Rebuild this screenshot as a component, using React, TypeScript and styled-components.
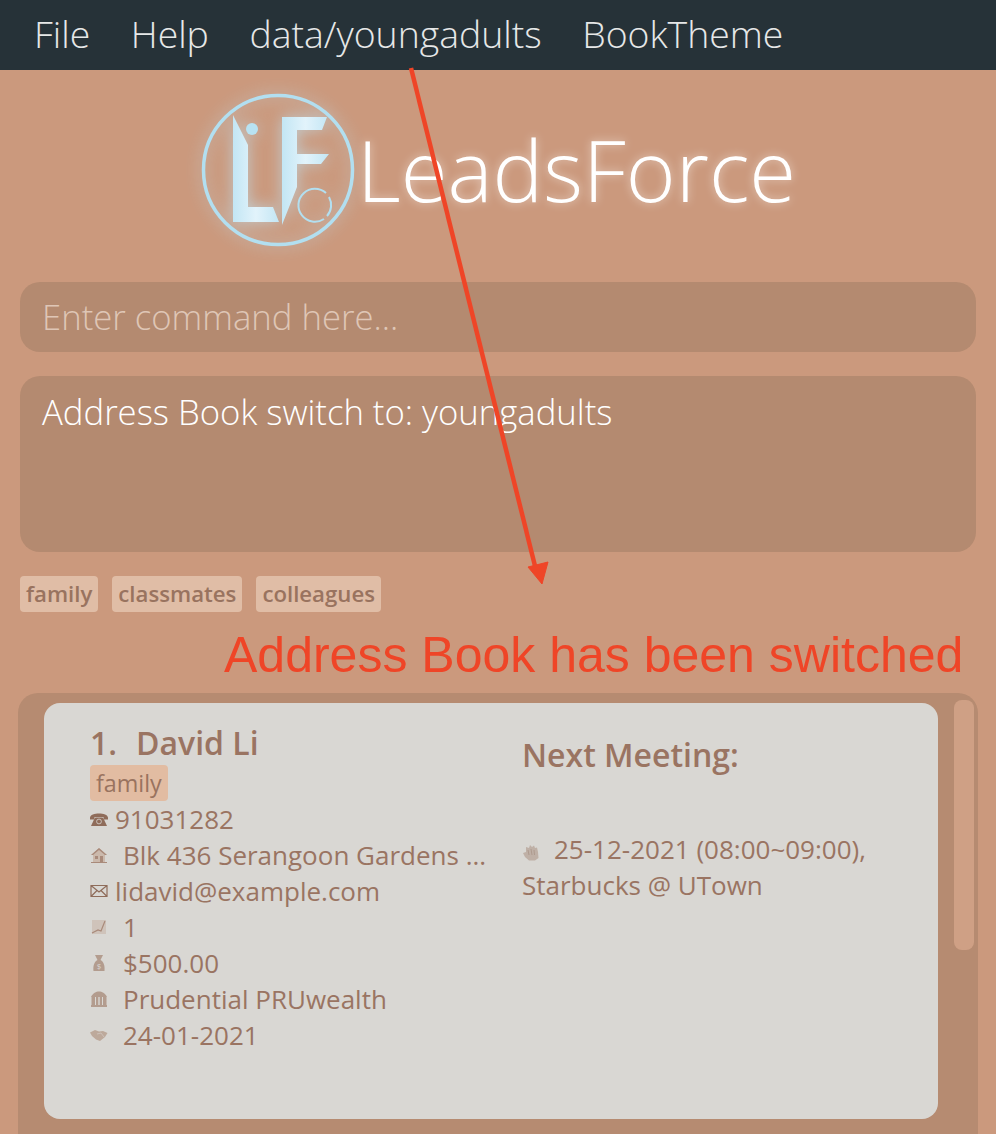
import React, { ReactElement, ReactNode } from 'react'
import styled, { createGlobalStyle } from 'styled-components'

const GlobalStyle = createGlobalStyle`
  html, body {
    margin: 0;
    padding: 0;
    height: 1134px;
    overflow: hidden;
    background: #cb997d;
  }
`

const Page = styled.div`
  position: relative;
  width: 996px;
  height: 1134px;
  overflow: hidden;
  display: flex;
  flex-direction: column;
  background: #cb997d;
  font-family: 'Open Sans', sans-serif;
`

const MenuBar = styled.nav`
  height: 70px;
  flex: none;
  display: flex;
  align-items: center;
  gap: 40.5px;
  padding-left: 34px;
  padding-bottom: 2px;
  box-sizing: border-box;
  background: #263238;
`

const MenuItem = styled.span`
  color: #e6e8e8;
  font-size: 37.4px;
  font-weight: 300;
  line-height: 68px;
`

const Header = styled.header`
  height: 212px;
  flex: none;
  display: flex;
  align-items: flex-start;
  padding: 10px 0 0 190px;
  box-sizing: border-box;
`

const LogoMark = styled.svg`
  flex: none;
  overflow: visible;
  filter: drop-shadow(0 0 8px rgb(190 228 245 / 70%));
`

const AppTitle = styled.h1`
  margin: 14px 0 0 1px;
  color: #ffffff;
  font-size: 85.2px;
  font-weight: 300;
  line-height: 150px;
  letter-spacing: 0;
  text-shadow: 0 0 10px rgb(255 255 255 / 55%);
`

const Box = styled.div<{ $height: number }>`
  height: ${p => p.$height}px;
  flex: none;
  margin: 0 20px;
  padding: 0 22px;
  box-sizing: border-box;
  border-radius: 20px;
  background: #b48a70;
  font-size: 34.7px;
  font-weight: 300;
`

const CommandBox = styled(Box)`
  display: flex;
  align-items: center;
  color: #dfc6b6;
  padding-bottom: 2px;
  margin-bottom: 24px;
`

const ResultBox = styled(Box)`
  color: #ffffff;
  padding-top: 14px;
  line-height: 44px;
`

const TagRow = styled.div`
  flex: none;
  display: flex;
  gap: 14px;
  margin: 24px 20px 0;
`

const Tag = styled.span`
  height: 36px;
  padding: 0 6px 2px;
  box-sizing: border-box;
  border-radius: 4px;
  display: flex;
  align-items: center;
  background: #e0bda6;
  color: #99735f;
  font-size: 22.2px;
  font-weight: 600;
`

const ListPanel = styled.section`
  flex: none;
  height: 460px;
  margin: 81px 18px 0;
  padding: 10px 4px 0 26px;
  box-sizing: border-box;
  display: flex;
  gap: 16px;
  border-radius: 20px 20px 0 0;
  background: #b68b71;
`

const PersonCard = styled.article`
  width: 894px;
  height: 416px;
  flex: none;
  box-sizing: border-box;
  padding: 18px 46px 0;
  display: grid;
  grid-template-columns: 432px 1fr;
  border-radius: 16px;
  background: #d9d7d3;
  color: #9a7462;
  font-size: 26px;
  line-height: 36px;
`

const Column = styled.div`
  display: flex;
  flex-direction: column;
  min-width: 0;
`

const Name = styled.div`
  font-size: 32px;
  font-weight: 600;
  line-height: 44px;
`

const NameIndex = styled.span`
  margin-right: 19px;
`

const CardTag = styled(Tag)`
  align-self: flex-start;
  padding-bottom: 0;
  background: #e2bca2;
  font-weight: 400;
  font-size: 23.3px;
`

const Field = styled.div<{ $wide?: boolean }>`
  height: 36px;
  display: flex;
  align-items: center;
  gap: ${p => (p.$wide ? 15 : 7)}px;
  white-space: nowrap;
`

const IconSlot = styled.span`
  width: 18px;
  height: 18px;
  flex: none;
  display: flex;
  align-items: center;
  justify-content: center;

  svg {
    display: block;
    width: 100%;
    height: 100%;
  }
`

const MeetingTitle = styled.div`
  margin-top: 12px;
  font-size: 32px;
  font-weight: 600;
  line-height: 43px;
`

const MeetingText = styled.div`
  margin-top: 55px;
  font-size: 26px;
  line-height: 36px;
`

const MeetingIcon = styled(IconSlot)`
  display: inline-flex;
  margin-right: 14px;
  vertical-align: -3px;
`

const ScrollThumb = styled.div`
  width: 20px;
  height: 250px;
  margin-top: -3px;
  flex: none;
  border-radius: 8px;
  background: #cfa085;
`

const Annotation = styled.div`
  position: absolute;
  left: 224px;
  top: 626px;
  color: #ef4527;
  font-family: 'Liberation Sans', Arial, sans-serif;
  font-size: 50px;
  line-height: 58px;
  white-space: nowrap;
`

const ArrowOverlay = styled.svg`
  position: absolute;
  left: 0;
  top: 0;
  pointer-events: none;
`

const LeadsForceLogo = (): ReactElement => (
  <LogoMark width='166' height='180' viewBox='0 0 166 180'>
    <defs>
      <linearGradient id='lf' x1='0' y1='0' x2='1' y2='0'>
        <stop offset='0' stopColor='#c3e6f4' />
        <stop offset='0.5' stopColor='#e2f3fb' />
        <stop offset='1' stopColor='#c3e6f4' />
      </linearGradient>
    </defs>
    <circle cx='88' cy='90' r='74.5' fill='none' stroke='#b2dff0' strokeWidth='3.5' />
    <path d='M43 35 L58 65 V127 H83 L89 142 H43 Z' fill='url(#lf)' />
    <circle cx='62' cy='49' r='6' fill='#b8e2f2' />
    <path d='M92 37 H137 L132 50 H107 V74 H139 L131 84 H107 V107 L92 145 Z' fill='url(#lf)' />
    <path d='M136 113 A 16.5 16.5 0 1 0 134 139' fill='none' stroke='#b2dff0' strokeWidth='2' />
    <path d='M139 117 A 16.5 16.5 0 0 1 137 136' fill='none' stroke='#b2dff0' strokeWidth='2' />
  </LogoMark>
)

const TINT = '#a98a7a'

const PhoneIcon = (): ReactElement => (
  <svg viewBox='0 0 18 18'>
    <path d='M0 7.5 C0.5 2 17.5 2 18 7.5 V9.5 H13.5 V7 H4.5 V9.5 H0 Z' fill='#8f6c5a' />
    <path d='M4 9.5 L5.5 7.5 H12.5 L14 9.5 L17 16 H1 Z' fill='#8f6c5a' />
    <circle cx='9' cy='11.5' r='2.4' fill='none' stroke='#d9d7d3' strokeWidth='0.8' />
  </svg>
)

const HouseIcon = (): ReactElement => (
  <svg viewBox='0 0 18 18'>
    <path d='M9 2 L17 9 H15 V16 H3 V9 H1 Z' fill='#cbb9ac' />
    <path d='M9 2 L17 9 H15 L9 4 L3 9 H1 Z' fill={TINT} />
    <rect x='5' y='10' width='3' height='3' fill={TINT} />
    <rect x='10' y='10' width='3' height='6' fill={TINT} />
    <rect x='1' y='16' width='16' height='1' fill={TINT} />
  </svg>
)

const MailIcon = (): ReactElement => (
  <svg viewBox='0 0 18 18'>
    <path d='M1 3.5 H17 V14.5 H1 Z M1 3.5 L9 10 L17 3.5 M1 14.5 L7 8.5 M17 14.5 L11 8.5' fill='none' stroke='#8f6c5a' strokeWidth='1.2' />
  </svg>
)

const ChartIcon = (): ReactElement => (
  <svg viewBox='0 0 18 18'>
    <rect x='2' y='2' width='14' height='14' fill='#cfc3ba' />
    <path d='M2 15 L8 12 L11 13 L15 3' fill='none' stroke={TINT} strokeWidth='1.2' />
  </svg>
)

const MoneyIcon = (): ReactElement => (
  <svg viewBox='0 0 18 18'>
    <path d='M5 1 H13 L10.5 6 C14 8 15 12 14.5 17 H3.5 C3 12 4 8 7.5 6 Z' fill='#b39c8e' />
    <text x='9' y='15' fontSize='8' textAnchor='middle' fill='#d9d7d3' fontFamily='Open Sans, sans-serif'>$</text>
  </svg>
)

const BankIcon = (): ReactElement => (
  <svg viewBox='0 0 18 18'>
    <path d='M1 7 C3 3 6 1.5 9 1.5 C12 1.5 15 3 17 7 Z' fill='#b39c8e' />
    <path d='M1.5 7 H5 V15 H1.5 Z M6 7 H8.3 V15 H6 Z M9.7 7 H12 V15 H9.7 Z M13 7 H16.5 V15 H13 Z' fill='#b39c8e' />
    <rect x='1' y='15' width='16' height='2' fill='#b39c8e' />
  </svg>
)

const HandshakeIcon = (): ReactElement => (
  <svg viewBox='0 0 18 18'>
    <path d='M0 6.5 L5 4 L9 5.5 L13 5 L17.5 7 L15 11 L10 15 L6 13.5 L2 10 Z' fill='#bda99b' />
    <path d='M7 8 L11 7 L14 11' fill='none' stroke='#d2c7bf' strokeWidth='0.8' />
  </svg>
)

const HandIcon = (): ReactElement => (
  <svg viewBox='0 0 18 18'>
    <path d='M1 9 L4 8 L4 3 L7 4 L8 1 L10 3 L12 1.5 L13 4 L15 3.5 L16 8 L16.5 14 L13 16.5 L7 16.5 L3 13 Z' fill='#bfb0a6' />
    <path d='M6 6 L7 11 M9 5 L10 11 M12 6 L12.5 11' stroke='#a99488' strokeWidth='0.8' fill='none' />
  </svg>
)

type PersonField = {
  icon: ReactNode
  text: string
  wide?: boolean
}

const personFields: PersonField[] = [
  { icon: <PhoneIcon />, text: '91031282' },
  { icon: <HouseIcon />, text: 'Blk 436 Serangoon Gardens ...', wide: true },
  { icon: <MailIcon />, text: 'lidavid@example.com' },
  { icon: <ChartIcon />, text: '1', wide: true },
  { icon: <MoneyIcon />, text: '$500.00', wide: true },
  { icon: <BankIcon />, text: 'Prudential PRUwealth', wide: true },
  { icon: <HandshakeIcon />, text: '24-01-2021', wide: true },
]

const menuItems = ['File', 'Help', 'data/youngadults', 'BookTheme']
const tags = ['family', 'classmates', 'colleagues']

const App = (): ReactElement => (
  <Page>
    <GlobalStyle />
    <MenuBar>
      {menuItems.map(item => (
        <MenuItem key={item}>{item}</MenuItem>
      ))}
    </MenuBar>

    <Header>
      <LeadsForceLogo />
      <AppTitle>LeadsForce</AppTitle>
    </Header>

    <CommandBox $height={70}>Enter command here...</CommandBox>
    <ResultBox $height={176}>Address Book switch to: youngadults</ResultBox>

    <TagRow>
      {tags.map(tag => (
        <Tag key={tag}>{tag}</Tag>
      ))}
    </TagRow>

    <ListPanel>
      <PersonCard>
        <Column>
          <Name>
            <NameIndex>1.</NameIndex>David Li
          </Name>
          <CardTag>family</CardTag>
          {personFields.map(field => (
            <Field key={field.text} $wide={field.wide}>
              <IconSlot>{field.icon}</IconSlot>
              {field.text}
            </Field>
          ))}
        </Column>
        <Column>
          <MeetingTitle>Next Meeting:</MeetingTitle>
          <MeetingText>
            <MeetingIcon>
              <HandIcon />
            </MeetingIcon>
            25-12-2021 (08:00~09:00),
            <br />
            Starbucks @ UTown
          </MeetingText>
        </Column>
      </PersonCard>
      <ScrollThumb />
    </ListPanel>

    <Annotation>Address Book has been switched</Annotation>
    <ArrowOverlay width='996' height='1134' viewBox='0 0 996 1134'>
      <path d='M411 68 L535 566' stroke='#ef4527' strokeWidth='4.5' fill='none' />
      <path d='M528 567 L548 562 L542 584 Z' fill='#ef4527' stroke='#ef4527' strokeWidth='1' />
    </ArrowOverlay>
  </Page>
)

export default App
